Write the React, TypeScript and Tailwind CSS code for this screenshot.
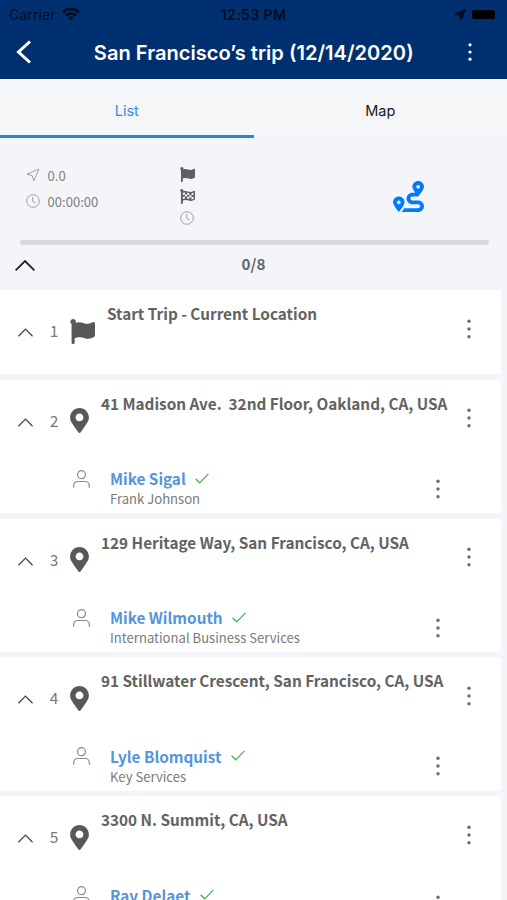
import { useState } from 'react'
import { FaFlag, FaFlagCheckered, FaLocationArrow, FaMapMarkerAlt, FaRoute } from 'react-icons/fa'

interface Contact {
  name: string
  company: string
}

interface Stop {
  id: number
  title: string
  contact?: Contact
}

const stops: Stop[] = [
  { id: 1, title: 'Start Trip - Current Location' },
  {
    id: 2,
    title: '41 Madison Ave.  32nd Floor, Oakland, CA, USA',
    contact: { name: 'Mike Sigal', company: 'Frank Johnson' },
  },
  {
    id: 3,
    title: '129 Heritage Way, San Francisco, CA, USA',
    contact: { name: 'Mike Wilmouth', company: 'International Business Services' },
  },
  {
    id: 4,
    title: '91 Stillwater Crescent, San Francisco, CA, USA',
    contact: { name: 'Lyle Blomquist', company: 'Key Services' },
  },
  {
    id: 5,
    title: '3300 N. Summit, CA, USA',
    contact: { name: 'Ray Delaet', company: '' },
  },
]

function WifiIcon() {
  return (
    <svg width="18" height="14" viewBox="0 0 18 14" fill="none" stroke="currentColor" strokeWidth="2.7">
      <path d="M1 5.2a11.5 11.5 0 0 1 16 0" />
      <path d="M4 8.5a7.2 7.2 0 0 1 10 0" />
      <path d="M9 13.6 6.2 10.8a4 4 0 0 1 5.6 0z" fill="currentColor" stroke="none" />
    </svg>
  )
}

function ChevronUp({ className }: { className: string }) {
  return (
    <svg viewBox="0 0 20 11" className={className} fill="none" stroke="currentColor">
      <path d="M.6 10.4 10 1l9.4 9.4" />
    </svg>
  )
}

function Dots({ className }: { className: string }) {
  return (
    <svg width="6" height="20" viewBox="0 0 6 20" className={className} fill="currentColor">
      <circle cx="3" cy="2.2" r="1.7" />
      <circle cx="3" cy="10" r="1.7" />
      <circle cx="3" cy="17.8" r="1.7" />
    </svg>
  )
}

function ClockIcon() {
  return (
    <svg width="14" height="14" viewBox="0 0 14 14" className="text-[#a0a0a0]" fill="none" stroke="currentColor">
      <circle cx="7" cy="7" r="6.3" />
      <path d="M6.7 3v4.3L9.4 9" />
    </svg>
  )
}

function SendIcon() {
  return (
    <svg width="14" height="14" viewBox="0 0 14 14" className="text-[#a0a0a0]" fill="none" stroke="currentColor" strokeLinejoin="round">
      <path d="M13 1 .9 6.2l5.3 1.4 1.6 5.2z" />
    </svg>
  )
}

function PersonIcon() {
  return (
    <svg width="17" height="18" viewBox="0 0 17 18" className="text-[#8c8c8c]" fill="none" stroke="currentColor" strokeWidth="1.2">
      <circle cx="8.5" cy="4.7" r="4" />
      <path d="M.7 17.8v-2.3a4 4 0 0 1 4-4h7.6a4 4 0 0 1 4 4v2.3" />
    </svg>
  )
}

function CheckIcon() {
  return (
    <svg width="14" height="11" viewBox="0 0 14 11" className="text-[#4caf50]" fill="none" stroke="currentColor" strokeWidth="1.2">
      <path d="M.6 5.8 4.7 9.8 13.4.9" />
    </svg>
  )
}

function StopCard({ stop }: { stop: Stop }) {
  const isStart = !stop.contact

  return (
    <div
      className={`mr-1.5 shrink-0 rounded-r-[3px] bg-white ${isStart ? 'h-[84.4px]' : 'h-[133.3px]'}`}
    >
      <div className="flex h-[82px] items-center">
        <ChevronUp className="mt-[3px] ml-[18px] h-[9px] w-[15px] stroke-[1.7] text-[#444]" />
        <span className="-mt-0.5 ml-[13px] w-4 text-center text-[15.5px] leading-5 text-[#777]">{stop.id}</span>
        <div className="ml-2 flex w-[30px] text-[#585858]">
          {isStart ? <FaFlag size={25} /> : <FaMapMarkerAlt size={25} className="-ml-[3.5px]" />}
        </div>
        <h2
          className={`flex-1 self-start pt-[13px] text-[15.3px] leading-5 font-bold whitespace-pre text-[#626262] ${isStart ? 'ml-[7px]' : 'ml-px'}`}
        >
          {stop.title}
        </h2>
        <Dots className="mr-[29px] -mt-[5px] text-[#6c6c6c]" />
      </div>

      {stop.contact && (
        <div className="flex items-start">
          <div className="mt-2 ml-[73px]">
            <PersonIcon />
          </div>
          <div className="ml-5 flex-1 pt-[6.4px]">
            <div className="flex items-center gap-[9.5px]">
              <span className="text-[15.3px] leading-5 font-bold text-[#5694dd]">{stop.contact.name}</span>
              <CheckIcon />
            </div>
            <p className="pt-px text-[13.1px] leading-5 text-[#7a7a7a]">{stop.contact.company}</p>
          </div>
          <Dots className="mt-[17px] mr-[60px] text-[#6c6c6c]" />
        </div>
      )}
    </div>
  )
}

export default function App() {
  const [tab, setTab] = useState<'list' | 'map'>('list')

  return (
    <div className="flex h-[900px] w-[507px] flex-col overflow-hidden bg-[#f4f5f8] font-['Noto_Sans_CJK_SC',sans-serif]">
      {/* Header */}
      <header className="h-[79px] shrink-0 bg-[#003070] font-['Inter',sans-serif]">
        <div className="grid h-7 grid-cols-3 items-center px-[9px] text-[14px] text-[#020c20]">
          <div className="flex items-center gap-1.5">
            <span className="tracking-[0.1px]">Carrier</span>
            <WifiIcon />
          </div>
          <span className="text-center font-semibold tracking-[0.4px]">12:53 PM</span>
          <div className="mr-[3px] flex items-center justify-end gap-[6px]">
            <FaLocationArrow size={11} />
            <span className="h-[9px] w-[23px] rounded-[2px] bg-black" />
          </div>
        </div>
        <div className="flex h-12 items-center text-white">
          <svg width="16" height="24" viewBox="0 0 16 24" className="ml-[15.5px]" fill="none" stroke="currentColor" strokeWidth="3">
            <path d="M14 1.5 2.5 12 14 22.5" />
          </svg>
          <h1 className="flex-1 pt-[1.5px] pl-[9px] text-center text-[20.1px] font-semibold">San Francisco’s trip (12/14/2020)</h1>
          <svg width="6" height="20" viewBox="0 0 6 20" className="mr-[34px]" fill="currentColor">
            <circle cx="3" cy="2.8" r="1.6" />
            <circle cx="3" cy="10" r="1.6" />
            <circle cx="3" cy="17.2" r="1.6" />
          </svg>
        </div>
      </header>

      {/* Tabs */}
      <nav className="grid h-[59px] shrink-0 grid-cols-2 bg-[#f4f6f8] font-['Inter',sans-serif] text-[14.5px]">
        <button
          onClick={() => setTab('list')}
          className={`border-b-[3px] pt-[7px] ${tab === 'list' ? 'border-[#2488e0] text-[#2f8be0]' : 'border-transparent text-[#1c1c1c]'}`}
        >
          List
        </button>
        <button
          onClick={() => setTab('map')}
          className={`border-b-[3px] pt-[7px] ${tab === 'map' ? 'border-[#2488e0] text-[#2f8be0]' : 'border-transparent text-[#1c1c1c]'}`}
        >
          Map
        </button>
      </nav>

      {/* Trip summary */}
      <section className="flex h-[102px] shrink-0 items-start text-[13.1px] text-[#808080]">
        <div className="flex w-[154px] flex-col gap-1.5 pt-[27px] pl-[26px]">
          <div className="flex h-5 items-center gap-[7.5px]">
            <SendIcon />
            <span className="pt-0.5 leading-5">0.0</span>
          </div>
          <div className="flex h-5 items-center gap-[7.5px]">
            <ClockIcon />
            <span className="pt-0.5 leading-5">00:00:00</span>
          </div>
        </div>
        <div className="flex flex-1 flex-col gap-[7px] pt-[29px] pl-[26px] text-[#606060]">
          <FaFlag size={15} />
          <FaFlagCheckered size={15} />
          <ClockIcon />
        </div>
        <FaRoute size={31} className="mt-[43px] mr-[83px] text-[#007aff]" />
      </section>

      <div className="mr-[18px] ml-5 h-[5px] shrink-0 rounded-sm bg-[#d8d9db]" />

      {/* Progress */}
      <div className="mb-[7px] flex h-[38px] shrink-0 items-center">
        <ChevronUp className="mt-0.5 ml-[15px] h-[11px] w-5 stroke-[1.8] text-[#222]" />
        <span className="mr-[35px] flex-1 pb-0.5 text-center text-[15.3px] leading-5 font-bold text-[#666]">0/8</span>
      </div>

      {/* Stops */}
      <main className="flex min-h-0 flex-1 flex-col gap-[5.5px] overflow-hidden">
        {stops.map(stop => (
          <StopCard key={stop.id} stop={stop} />
        ))}
      </main>
    </div>
  )
}
